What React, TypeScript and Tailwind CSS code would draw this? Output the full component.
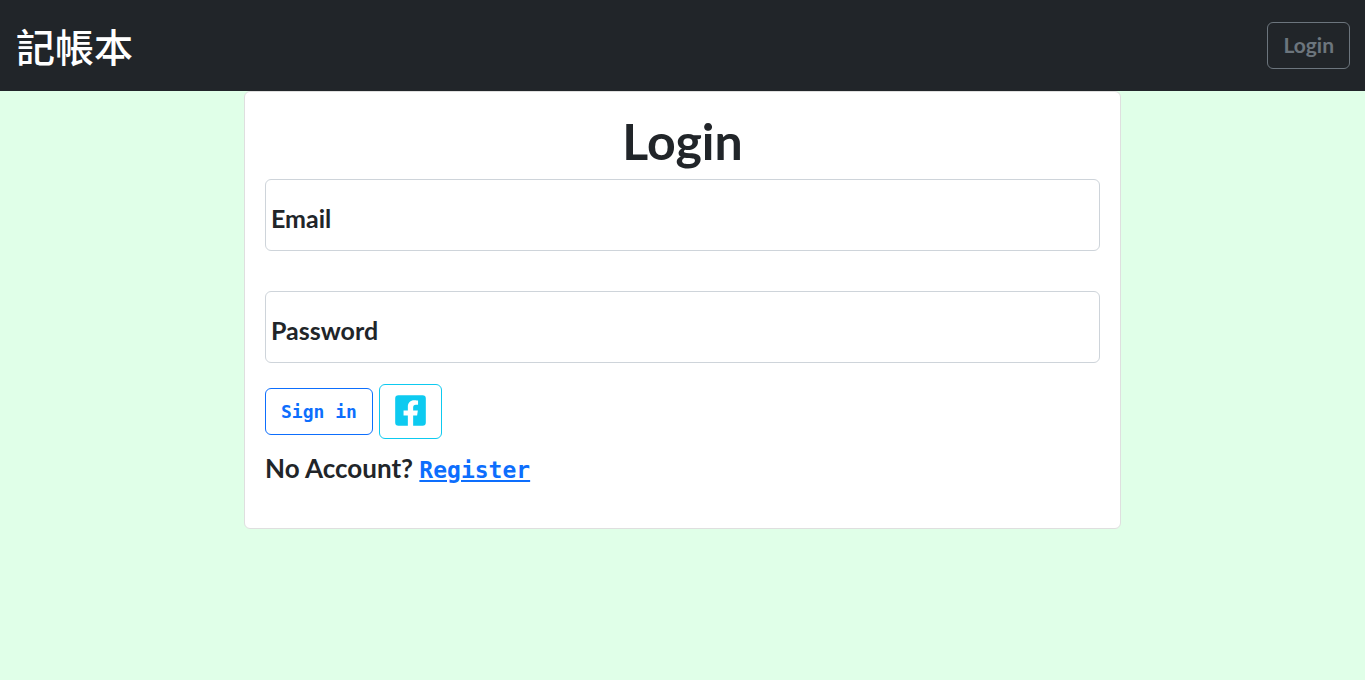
import { FaFacebookSquare } from "react-icons/fa";

type FieldProps = { id: string; label: string; type: string; autoComplete: string };

function FloatingField({ id, label, type, autoComplete }: FieldProps) {
  return (
    <div className="relative">
      <input
        id={id}
        name={id}
        type={type}
        autoComplete={autoComplete}
        className="block h-18 w-full rounded-md border border-[#ced4da] bg-white px-1.5 pt-6 text-2xl text-[#212529] outline-none focus:border-[#86b7fe]"
      />
      <label
        htmlFor={id}
        className="pointer-events-none absolute inset-y-0 left-0 flex items-center px-1.5 pt-2 text-[25px] font-bold"
      >
        {label}
      </label>
    </div>
  );
}

export default function App() {
  return (
    <div className="min-h-screen bg-[#e0ffe8] font-['Lato',sans-serif] text-[#212529]">
      <header className="flex items-center justify-between bg-[#212529] px-4 py-[22px]">
        <a
          href="#"
          className="font-['Noto_Sans_CJK_TC',sans-serif] text-[39px] leading-[47px] font-medium text-white"
        >
          記帳本
        </a>
        <button
          type="button"
          className="-mr-px rounded-md border border-[#6c757d] px-[15px] pt-[7px] pb-[9px] text-[21px] leading-[29px] font-bold text-[#6c757d]"
        >
          Login
        </button>
      </header>

      <main className="mx-auto w-full max-w-[877px] rounded-md border border-[#dfdfdf] bg-white px-5 pt-5 pb-[41px]">
        <h1 className="mb-2 text-center text-[50px] leading-[59px] font-bold">Login</h1>
        <form onSubmit={(event) => event.preventDefault()}>
          <div className="flex flex-col gap-10">
            <FloatingField id="email" label="Email" type="email" autoComplete="email" />
            <FloatingField
              id="password"
              label="Password"
              type="password"
              autoComplete="current-password"
            />
          </div>
          <div className="mt-[21px] flex items-center gap-1.5">
            <button
              type="submit"
              className="rounded-md border border-[#0d6efd] px-[15px] py-2 font-['DejaVu_Sans_Mono',monospace] text-lg leading-[29px] font-bold text-[#0d6efd]"
            >
              Sign in
            </button>
            <button
              type="button"
              aria-label="Sign in with Facebook"
              className="rounded-md border border-[#0dcaf0] px-[15px] pt-2 pb-[10px] text-[#0dcaf0]"
            >
              <FaFacebookSquare className="h-[35px] w-[31px]" />
            </button>
          </div>
        </form>
        <p className="mt-3 text-[26px] leading-[34px] font-bold">
          No Account?{" "}
          <a
            href="#register"
            className="font-['DejaVu_Sans_Mono',monospace] text-[23px] text-[#0d6efd] underline"
          >
            Register
          </a>
        </p>
      </main>
    </div>
  );
}
